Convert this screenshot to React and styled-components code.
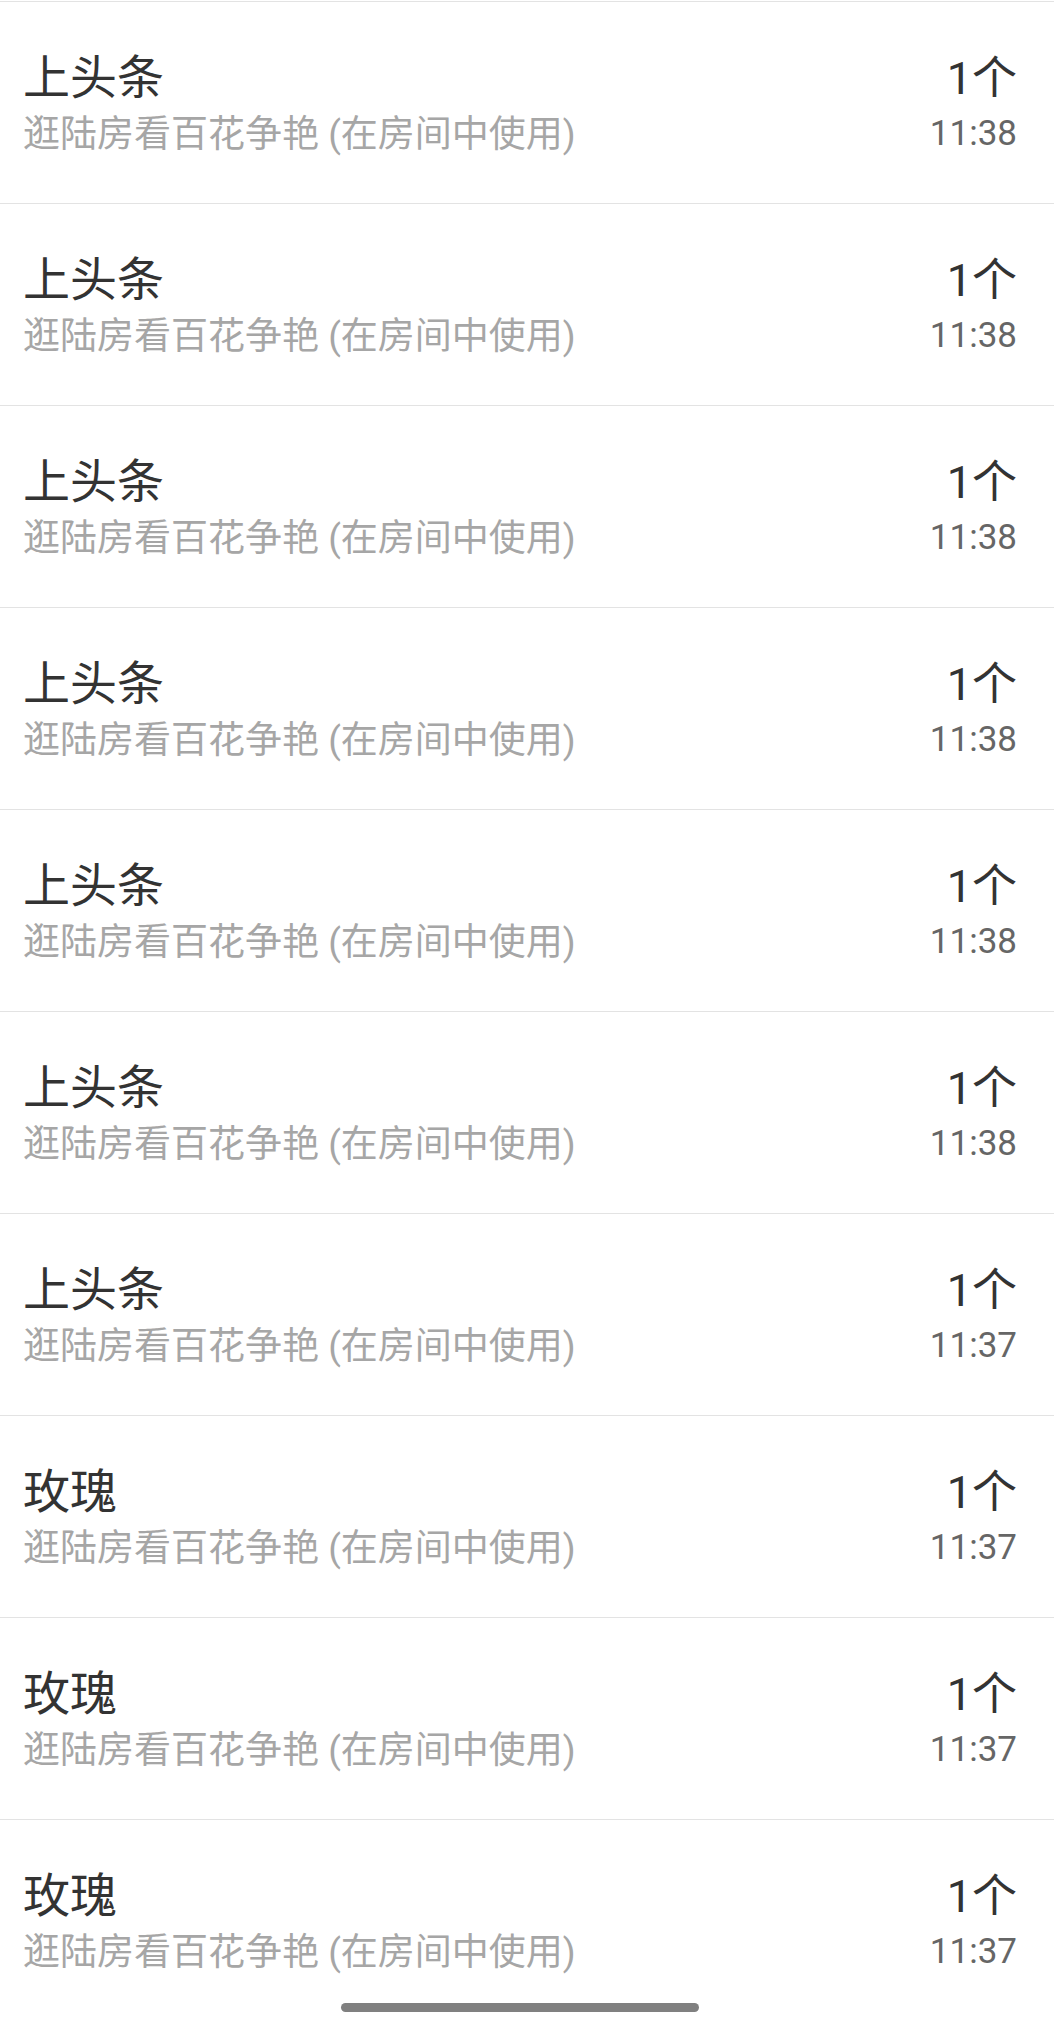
import styled, { createGlobalStyle } from "styled-components";

const GlobalStyle = createGlobalStyle`
  html, body {
    margin: 0;
    padding: 0;
    background: #ffffff;
    font-family: Roboto, "Noto Sans CJK SC", sans-serif;
  }
`;

const Page = styled.div`
  width: 100%;
  min-height: 2021px;
  padding-top: 1px;
  box-sizing: border-box;
  background: #ffffff;
`;

const List = styled.div`
  display: flex;
  flex-direction: column;
`;

const Row = styled.div`
  height: 202px;
  box-sizing: border-box;
  border-top: 1px solid #e3e3e3;
  display: flex;
  align-items: center;
  justify-content: space-between;
  padding: 4px 37px 0 23px;
`;

const Left = styled.div`
  display: flex;
  flex-direction: column;
  gap: 9px;
`;

const Right = styled.div`
  display: flex;
  flex-direction: column;
  align-items: flex-end;
  gap: 7px;
`;

const Title = styled.span`
  font-size: 47px;
  line-height: 52px;
  color: #333333;
`;

const Desc = styled.span`
  font-size: 37px;
  line-height: 44px;
  color: #a6a6a6;
`;

const Count = styled.span`
  font-size: 45px;
  line-height: 52px;
  color: #333333;
`;

const Time = styled.span`
  font-size: 35px;
  line-height: 44px;
  color: #666666;
`;

const HomeBar = styled.div`
  position: absolute;
  left: 341px;
  top: 2003px;
  width: 358px;
  height: 9px;
  border-radius: 5px;
  background: #808080;
`;

const records = [
  { name: "上头条", time: "11:38" },
  { name: "上头条", time: "11:38" },
  { name: "上头条", time: "11:38" },
  { name: "上头条", time: "11:38" },
  { name: "上头条", time: "11:38" },
  { name: "上头条", time: "11:38" },
  { name: "上头条", time: "11:37" },
  { name: "玫瑰", time: "11:37" },
  { name: "玫瑰", time: "11:37" },
  { name: "玫瑰", time: "11:37" },
];

function App() {
  return (
    <Page>
      <GlobalStyle />
      <List>
        {records.map((item, i) => (
          <Row key={i}>
            <Left>
              <Title>{item.name}</Title>
              <Desc>逛陆房看百花争艳 (在房间中使用)</Desc>
            </Left>
            <Right>
              <Count>1个</Count>
              <Time>{item.time}</Time>
            </Right>
          </Row>
        ))}
      </List>
      <HomeBar />
    </Page>
  );
}

export default App;
